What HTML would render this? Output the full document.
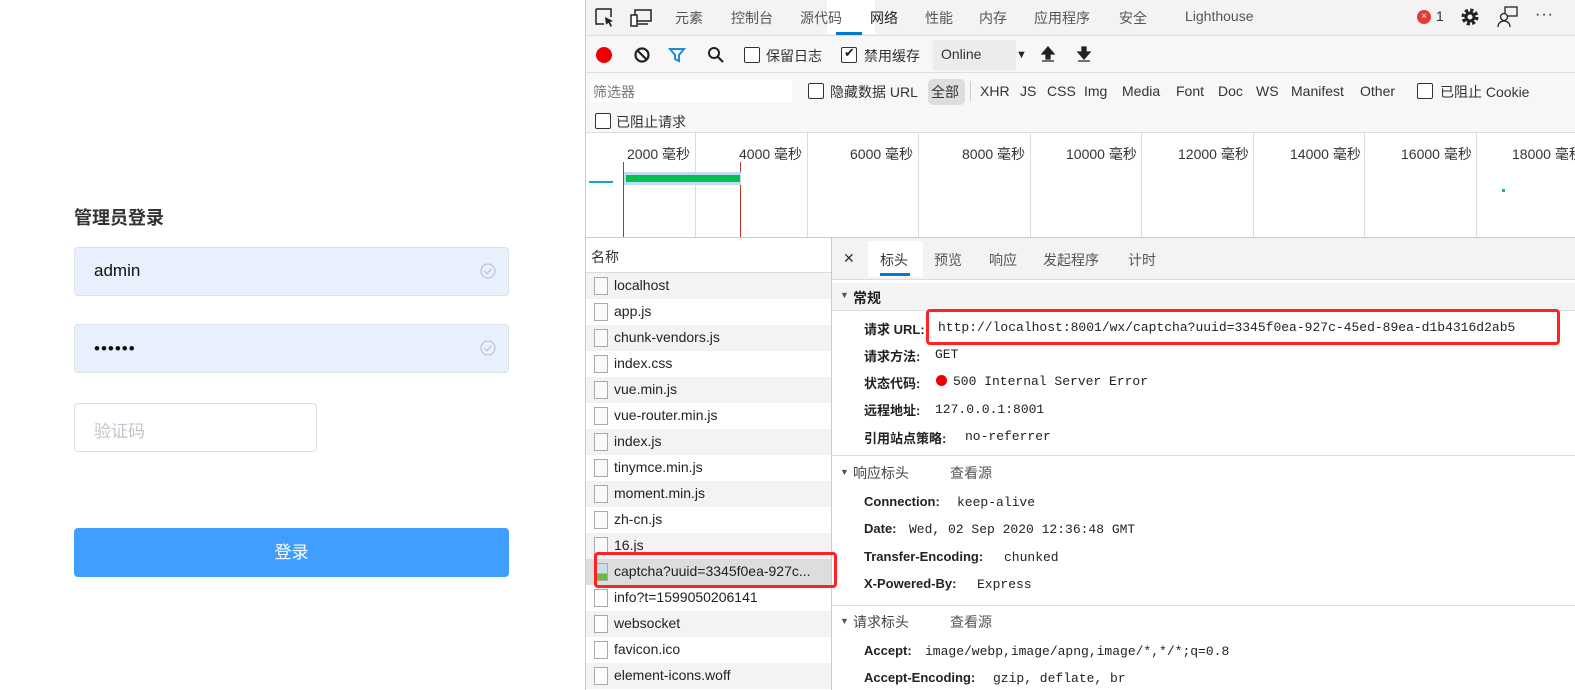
<!DOCTYPE html>
<html><head><meta charset="utf-8"><style>
*{margin:0;padding:0;box-sizing:border-box}
body{width:1575px;height:690px;overflow:hidden;background:#fff;font-family:"Liberation Sans","Noto Sans CJK SC",sans-serif;position:relative;color:#333}
.a{position:absolute;white-space:nowrap}
.inp{position:absolute;border:1px solid #dcdfe6;border-radius:4px;background:#e8f0fe}
.chk{position:absolute;width:16px;height:16px;border:1.5px solid #333;border-radius:2px;background:#fff}
.t{font-size:14px;color:#333}
.mono{font-family:"Liberation Mono",monospace;font-size:13px;color:#222}
.b{font-weight:bold;font-size:13px;color:#222}
.vl{position:absolute;top:133px;width:1px;height:104px;background:#ddd}
.row{position:absolute;left:586px;width:245px;height:26px;font-size:14px;color:#222}
.row span{position:absolute;left:28px;top:4px}
.fi{position:absolute;left:8px;top:4px;width:14px;height:18px;border:1px solid #aaa;background:#fafafa}
</style></head><body>
<!-- login -->
<div class="a" style="left:74px;top:204px;font-size:18px;font-weight:bold;color:#333">管理员登录</div>
<div class="inp" style="left:74px;top:247px;width:435px;height:49px"></div>
<div class="a" style="left:94px;top:261px;font-size:17px;color:#111">admin</div>
<div class="inp" style="left:74px;top:324px;width:435px;height:49px"></div>
<div class="a" style="left:94px;top:339px;font-size:17px;color:#111;letter-spacing:1px">••••••</div>
<svg class="a" style="left:480px;top:263px" width="16" height="16"><circle cx="8" cy="8" r="7" fill="none" stroke="#c0c4cc" stroke-width="1.2"/><path d="M4.5 8.2l2.5 2.5 4.5-5" fill="none" stroke="#c0c4cc" stroke-width="1.2"/></svg>
<svg class="a" style="left:480px;top:340px" width="16" height="16"><circle cx="8" cy="8" r="7" fill="none" stroke="#c0c4cc" stroke-width="1.2"/><path d="M4.5 8.2l2.5 2.5 4.5-5" fill="none" stroke="#c0c4cc" stroke-width="1.2"/></svg>
<div class="inp" style="left:74px;top:403px;width:243px;height:49px;background:#fff"></div>
<div class="a" style="left:94px;top:417px;font-size:17px;color:#c0c4cc">验证码</div>
<div class="a" style="left:74px;top:528px;width:435px;height:49px;background:#409eff;border-radius:4px;color:#fff;font-size:17px;text-align:center;line-height:49px">登录</div>

<!-- devtools -->
<div class="a" style="left:585px;top:0;width:990px;height:690px;background:#fff;border-left:1px solid #ccc"></div>
<div class="a" style="left:586px;top:0;width:989px;height:36px;background:#f3f3f3;border-bottom:1px solid #ddd"></div>
<div class="a" style="left:827px;top:0;width:48px;height:34px;background:#fff"></div>
<div class="a" style="left:836px;top:32px;width:26px;height:3px;background:#0078d4"></div>
<svg class="a" style="left:595px;top:8px" width="20" height="20"><path d="M1 1h15v8M1 1v15h8" fill="none" stroke="#222" stroke-width="1.5"/><path d="M10 9l8 4-3 1 2 4-1.5.7-2-4-2.5 2z" fill="#222"/></svg>
<svg class="a" style="left:630px;top:9px" width="22" height="18"><rect x="5" y="1" width="16" height="11" fill="none" stroke="#222" stroke-width="1.5"/><rect x="1" y="6" width="6" height="11" fill="#fff" stroke="#222" stroke-width="1.5"/><path d="M8 15h10" stroke="#222" stroke-width="1.5"/></svg>
<div class="a t" style="left:675px;top:8px;color:#555">元素</div>
<div class="a t" style="left:731px;top:8px;color:#555">控制台</div>
<div class="a t" style="left:800px;top:8px;color:#555">源代码</div>
<div class="a t" style="left:870px;top:8px;color:#222">网络</div>
<div class="a t" style="left:925px;top:8px;color:#555">性能</div>
<div class="a t" style="left:979px;top:8px;color:#555">内存</div>
<div class="a t" style="left:1034px;top:8px;color:#555">应用程序</div>
<div class="a t" style="left:1119px;top:8px;color:#555">安全</div>
<div class="a t" style="left:1185px;top:8px;color:#555">Lighthouse</div>
<div class="a" style="left:1417px;top:10px;width:14px;height:14px;border-radius:7px;background:#e53935;color:#fff;font-size:10px;text-align:center;line-height:14px">×</div>
<div class="a t" style="left:1436px;top:8px;color:#333">1</div>
<svg class="a" style="left:1460px;top:7px" width="20" height="20" viewBox="0 0 20 20"><circle cx="10" cy="10" r="6.5" fill="none" stroke="#222" stroke-width="4" stroke-dasharray="3 2.1"/><circle cx="10" cy="10" r="5.5" fill="#222"/><circle cx="10" cy="10" r="2.5" fill="#f3f3f3"/></svg>
<svg class="a" style="left:1497px;top:6px" width="22" height="22"><rect x="8" y="1" width="12" height="9" fill="none" stroke="#222" stroke-width="1.3"/><circle cx="7" cy="11" r="3.5" fill="#f3f3f3" stroke="#222" stroke-width="1.3"/><path d="M1 21c0-4 3-6 6-6s6 2 6 6" fill="none" stroke="#222" stroke-width="1.3"/></svg>
<div class="a" style="left:1535px;top:6px;font-size:16px;color:#222;letter-spacing:1px">···</div>

<div class="a" style="left:586px;top:36px;width:989px;height:37px;background:#f7f7f7;border-bottom:1px solid #e0e0e0"></div>
<div class="a" style="left:596px;top:47px;width:16px;height:16px;border-radius:8px;background:#e00"></div>
<svg class="a" style="left:633px;top:46px" width="18" height="18"><circle cx="9" cy="9" r="6.5" fill="none" stroke="#222" stroke-width="2.2"/><path d="M4.5 4.5l9 9" stroke="#222" stroke-width="2.2"/></svg>
<svg class="a" style="left:668px;top:46px" width="18" height="18"><path d="M2 3h14l-5 6v6l-4-2v-4z" fill="none" stroke="#1a8ce0" stroke-width="2"/></svg>
<svg class="a" style="left:707px;top:46px" width="18" height="18"><circle cx="7" cy="7" r="5" fill="none" stroke="#222" stroke-width="2"/><path d="M11 11l5 5" stroke="#222" stroke-width="2.2"/></svg>
<div class="chk" style="left:744px;top:47px"></div>
<div class="a t" style="left:766px;top:46px">保留日志</div>
<div class="chk" style="left:841px;top:47px"></div>
<div class="a" style="left:844px;top:45px;font-size:13px;color:#222">✔</div>
<div class="a t" style="left:864px;top:46px">禁用缓存</div>
<div class="a" style="left:933px;top:40px;width:83px;height:30px;background:#ececec"></div>
<div class="a t" style="left:941px;top:46px">Online</div>
<div class="a" style="left:1016px;top:49px;font-size:11px;color:#222">▼</div>
<svg class="a" style="left:1040px;top:45px" width="16" height="18"><path d="M8 2l6 7h-4v5H6V9H2z M2 16h12" fill="#222" stroke="#222" stroke-width="1.3"/></svg>
<svg class="a" style="left:1076px;top:45px" width="16" height="18"><path d="M8 14l6-7h-4V2H6v5H2z M2 16h12" fill="#222" stroke="#222" stroke-width="1.3"/></svg>

<div class="a" style="left:586px;top:73px;width:989px;height:60px;background:#f7f7f7;border-bottom:1px solid #ddd"></div>
<div class="a" style="left:590px;top:80px;width:202px;height:22px;background:#fff"></div>
<div class="a" style="left:593px;top:82px;font-size:14px;color:#777">筛选器</div>
<div class="chk" style="left:808px;top:83px"></div>
<div class="a t" style="left:830px;top:82px">隐藏数据 URL</div>
<div class="a" style="left:928px;top:79px;width:37px;height:26px;background:#ddd;border-radius:5px"></div>
<div class="a t" style="left:931px;top:82px">全部</div>
<div class="a" style="left:970px;top:81px;width:1px;height:20px;background:#ccc"></div>
<div class="a t" style="left:980px;top:83px">XHR</div>
<div class="a t" style="left:1020px;top:83px">JS</div>
<div class="a t" style="left:1047px;top:83px">CSS</div>
<div class="a t" style="left:1084px;top:83px">Img</div>
<div class="a t" style="left:1122px;top:83px">Media</div>
<div class="a t" style="left:1176px;top:83px">Font</div>
<div class="a t" style="left:1218px;top:83px">Doc</div>
<div class="a t" style="left:1256px;top:83px">WS</div>
<div class="a t" style="left:1291px;top:83px">Manifest</div>
<div class="a t" style="left:1360px;top:83px">Other</div>
<div class="chk" style="left:1417px;top:83px"></div>
<div class="a t" style="left:1440px;top:82px">已阻止 Cookie</div>
<div class="chk" style="left:595px;top:113px"></div>
<div class="a t" style="left:616px;top:112px">已阻止请求</div>

<!-- timeline -->
<div class="vl" style="left:695px"></div><div class="vl" style="left:807px"></div><div class="vl" style="left:918px"></div><div class="vl" style="left:1030px"></div><div class="vl" style="left:1141px"></div><div class="vl" style="left:1253px"></div><div class="vl" style="left:1364px"></div><div class="vl" style="left:1476px"></div>
<div class="a t" style="left:627px;top:144px">2000 毫秒</div>
<div class="a t" style="left:739px;top:144px">4000 毫秒</div>
<div class="a t" style="left:850px;top:144px">6000 毫秒</div>
<div class="a t" style="left:962px;top:144px">8000 毫秒</div>
<div class="a t" style="left:1066px;top:144px">10000 毫秒</div>
<div class="a t" style="left:1178px;top:144px">12000 毫秒</div>
<div class="a t" style="left:1290px;top:144px">14000 毫秒</div>
<div class="a t" style="left:1401px;top:144px">16000 毫秒</div>
<div class="a t" style="left:1512px;top:144px">18000 毫秒</div>
<div class="a" style="left:623px;top:162px;width:1px;height:75px;background:#1a5fd0"></div>
<div class="a" style="left:740px;top:162px;width:1px;height:75px;background:#c33"></div>
<div class="a" style="left:624px;top:172px;width:117px;height:13px;background:#bfdcf5"></div>
<div class="a" style="left:626px;top:175px;width:114px;height:7px;background:#00c050"></div>
<div class="a" style="left:589px;top:181px;width:24px;height:2px;background:#1ab"></div>
<div class="a" style="left:1502px;top:189px;width:3px;height:3px;background:#2aa"></div>
<div class="a" style="left:586px;top:237px;width:989px;height:1px;background:#ccc"></div>

<!-- name column -->
<div class="a" style="left:831px;top:238px;width:1px;height:452px;background:#ccc"></div>
<div class="a" style="left:586px;top:238px;width:245px;height:35px;background:#fff;border-bottom:1px solid #ddd"></div>
<div class="a t" style="left:591px;top:247px">名称</div>
<div class="row" style="top:273px;background:#f3f3f3"><div class="fi"></div><span>localhost</span></div>
<div class="row" style="top:299px"><div class="fi"></div><span>app.js</span></div>
<div class="row" style="top:325px;background:#f3f3f3"><div class="fi"></div><span>chunk-vendors.js</span></div>
<div class="row" style="top:351px"><div class="fi"></div><span>index.css</span></div>
<div class="row" style="top:377px;background:#f3f3f3"><div class="fi"></div><span>vue.min.js</span></div>
<div class="row" style="top:403px"><div class="fi"></div><span>vue-router.min.js</span></div>
<div class="row" style="top:429px;background:#f3f3f3"><div class="fi"></div><span>index.js</span></div>
<div class="row" style="top:455px"><div class="fi"></div><span>tinymce.min.js</span></div>
<div class="row" style="top:481px;background:#f3f3f3"><div class="fi"></div><span>moment.min.js</span></div>
<div class="row" style="top:507px"><div class="fi"></div><span>zh-cn.js</span></div>
<div class="row" style="top:533px;background:#f3f3f3"><div class="fi"></div><span>16.js</span></div>
<div class="row" style="top:559px;background:#ddd"><div class="fi" style="background:linear-gradient(#cde 60%,#6b4 60%)"></div><span>captcha?uuid=3345f0ea-927c...</span></div>
<div class="row" style="top:585px"><div class="fi" style="background:#fff"></div><span>info?t=1599050206141</span></div>
<div class="row" style="top:611px;background:#f3f3f3"><div class="fi" style="background:#fff"></div><span>websocket</span></div>
<div class="row" style="top:637px"><div class="fi" style="background:#fff"></div><span>favicon.ico</span></div>
<div class="row" style="top:663px;background:#f3f3f3"><div class="fi" style="background:#fff"></div><span>element-icons.woff</span></div>
<div class="a" style="left:594px;top:552px;width:243px;height:36px;border:3px solid #f22;border-radius:4px"></div>

<!-- detail -->
<div class="a" style="left:832px;top:238px;width:743px;height:42px;background:#f3f3f3;border-bottom:1px solid #ddd"></div>
<div class="a" style="left:868px;top:241px;width:55px;height:36px;background:#fff"></div>
<div class="a" style="left:880px;top:273px;width:30px;height:3px;background:#0078d4"></div>
<div class="a t" style="left:843px;top:250px">✕</div>
<div class="a t" style="left:880px;top:250px">标头</div>
<div class="a t" style="left:934px;top:250px;color:#555">预览</div>
<div class="a t" style="left:989px;top:250px;color:#555">响应</div>
<div class="a t" style="left:1043px;top:250px;color:#555">发起程序</div>
<div class="a t" style="left:1128px;top:250px;color:#555">计时</div>
<div class="a" style="left:832px;top:283px;width:743px;height:28px;background:#f3f3f3;border-bottom:1px solid #ddd"></div>
<div class="a" style="left:840px;top:290px;font-size:9px;color:#555">▼</div>
<div class="a b" style="left:853px;top:288px;font-size:14px">常规</div>
<div class="a b" style="left:864px;top:319px">请求 URL:</div>
<div class="a mono" style="left:938px;top:320px">http://localhost:8001/wx/captcha?uuid=3345f0ea-927c-45ed-89ea-d1b4316d2ab5</div>
<div class="a" style="left:926px;top:309px;width:634px;height:36px;border:3px solid #f22;border-radius:4px"></div>
<div class="a b" style="left:864px;top:346px">请求方法:</div><div class="a mono" style="left:935px;top:347px">GET</div>
<div class="a b" style="left:864px;top:373px">状态代码:</div><div class="a" style="left:936px;top:375px;width:11px;height:11px;border-radius:6px;background:#e00"></div><div class="a mono" style="left:953px;top:374px">500 Internal Server Error</div>
<div class="a b" style="left:864px;top:400px">远程地址:</div><div class="a mono" style="left:935px;top:402px">127.0.0.1:8001</div>
<div class="a b" style="left:864px;top:428px">引用站点策略:</div><div class="a mono" style="left:965px;top:429px">no-referrer</div>
<div class="a" style="left:832px;top:455px;width:743px;height:1px;background:#ddd"></div>
<div class="a" style="left:840px;top:467px;font-size:9px;color:#555">▼</div>
<div class="a b" style="left:853px;top:463px;font-size:14px;color:#444;font-weight:normal">响应标头</div>
<div class="a t" style="left:950px;top:463px;color:#555">查看源</div>
<div class="a b" style="left:864px;top:494px">Connection:</div><div class="a mono" style="left:957px;top:495px">keep-alive</div>
<div class="a b" style="left:864px;top:521px">Date:</div><div class="a mono" style="left:909px;top:522px">Wed, 02 Sep 2020 12:36:48 GMT</div>
<div class="a b" style="left:864px;top:549px">Transfer-Encoding:</div><div class="a mono" style="left:1004px;top:550px">chunked</div>
<div class="a b" style="left:864px;top:576px">X-Powered-By:</div><div class="a mono" style="left:977px;top:577px">Express</div>
<div class="a" style="left:832px;top:605px;width:743px;height:1px;background:#ddd"></div>
<div class="a" style="left:840px;top:616px;font-size:9px;color:#555">▼</div>
<div class="a b" style="left:853px;top:612px;font-size:14px;color:#444;font-weight:normal">请求标头</div>
<div class="a t" style="left:950px;top:612px;color:#555">查看源</div>
<div class="a b" style="left:864px;top:643px">Accept:</div><div class="a mono" style="left:925px;top:644px">image/webp,image/apng,image/*,*/*;q=0.8</div>
<div class="a b" style="left:864px;top:670px">Accept-Encoding:</div><div class="a mono" style="left:993px;top:671px">gzip, deflate, br</div>
</body></html>
